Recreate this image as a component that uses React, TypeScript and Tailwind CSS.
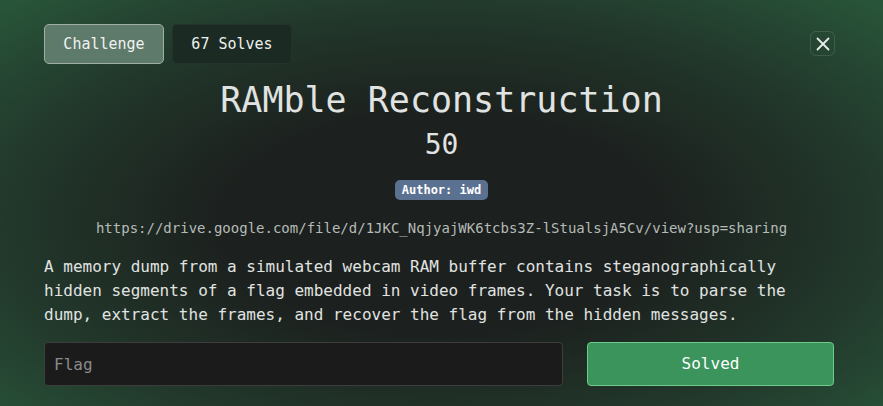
import { X } from "lucide-react";

const mono = "font-['DejaVu_Sans_Mono','Liberation_Mono',monospace]";

const App = () => {
    return (
        <div className={`${mono} w-[883px] h-[406px] overflow-hidden bg-[radial-gradient(ellipse_70%_75%_at_50%_55%,#1c201e_35%,#22382b_70%,#285439_100%)] text-[#e4e7e5] px-[44px] pt-[24px]`}>
            <div className="flex items-start justify-between">
                <div className="flex gap-2">
                    <button className="w-[120px] h-[40px] rounded-[5px] border border-[#9fb1a5] bg-[#5e7a6a] text-[15px] text-[#f0f2f0]">
                        Challenge
                    </button>
                    <button className="w-[120px] h-[40px] rounded-[5px] border border-[#ffffff0a] bg-[#1b2a22] text-[15px] text-[#eef0ee]">
                        67 Solves
                    </button>
                </div>
                <button className="mt-[7px] mr-[4px] w-[25px] h-[25px] rounded-[6px] border border-[#ffffff1f] flex items-center justify-center text-[#e8ebe9]">
                    <X size={22} strokeWidth={2} />
                </button>
            </div>
            <h1 className="text-center text-[35px] leading-[44px] mt-[14px] text-[#e0e3e1]">
                RAMble Reconstruction
            </h1>
            <p className="text-center text-[28px] leading-[36px] mt-[5px] text-[#e0e3e1]">50</p>
            <div className="flex justify-center mt-[17px]">
                <span className="h-[20px] px-[7px] rounded-[5px] bg-[#5b7191] text-white text-[12px] font-bold leading-[20px]">
                    Author: iwd
                </span>
            </div>
            <p className="text-center text-[14px] leading-[20px] mt-[18px] text-[#b5bbb7]">
                https://drive.google.com/file/d/1JKC_NqjyajWK6tcbs3Z-lStualsjA5Cv/view?usp=sharing
            </p>
            <p className="text-[16px] leading-[24px] mt-[17px] text-[#e0e3e1] w-[795px]">
                A memory dump from a simulated webcam RAM buffer contains steganographically hidden segments of a flag embedded in video frames. Your task is to parse the dump, extract the frames, and recover the flag from the hidden messages.
            </p>
            <div className="flex gap-[24px] mt-[15px] w-[790px]">
                <input
                    placeholder="Flag"
                    className="w-[519px] h-[44px] rounded-[4px] border border-[#3d3d3d] bg-[#1b1b1b] px-[9px] text-[16px] text-white placeholder:text-[#8a8a8a] outline-none"
                />
                <button className="w-[247px] h-[44px] rounded-[4px] border border-[#6fcb8c] bg-[#3a945b] text-[16px] text-white">
                    Solved
                </button>
            </div>
        </div>
    );
};

export default App;
